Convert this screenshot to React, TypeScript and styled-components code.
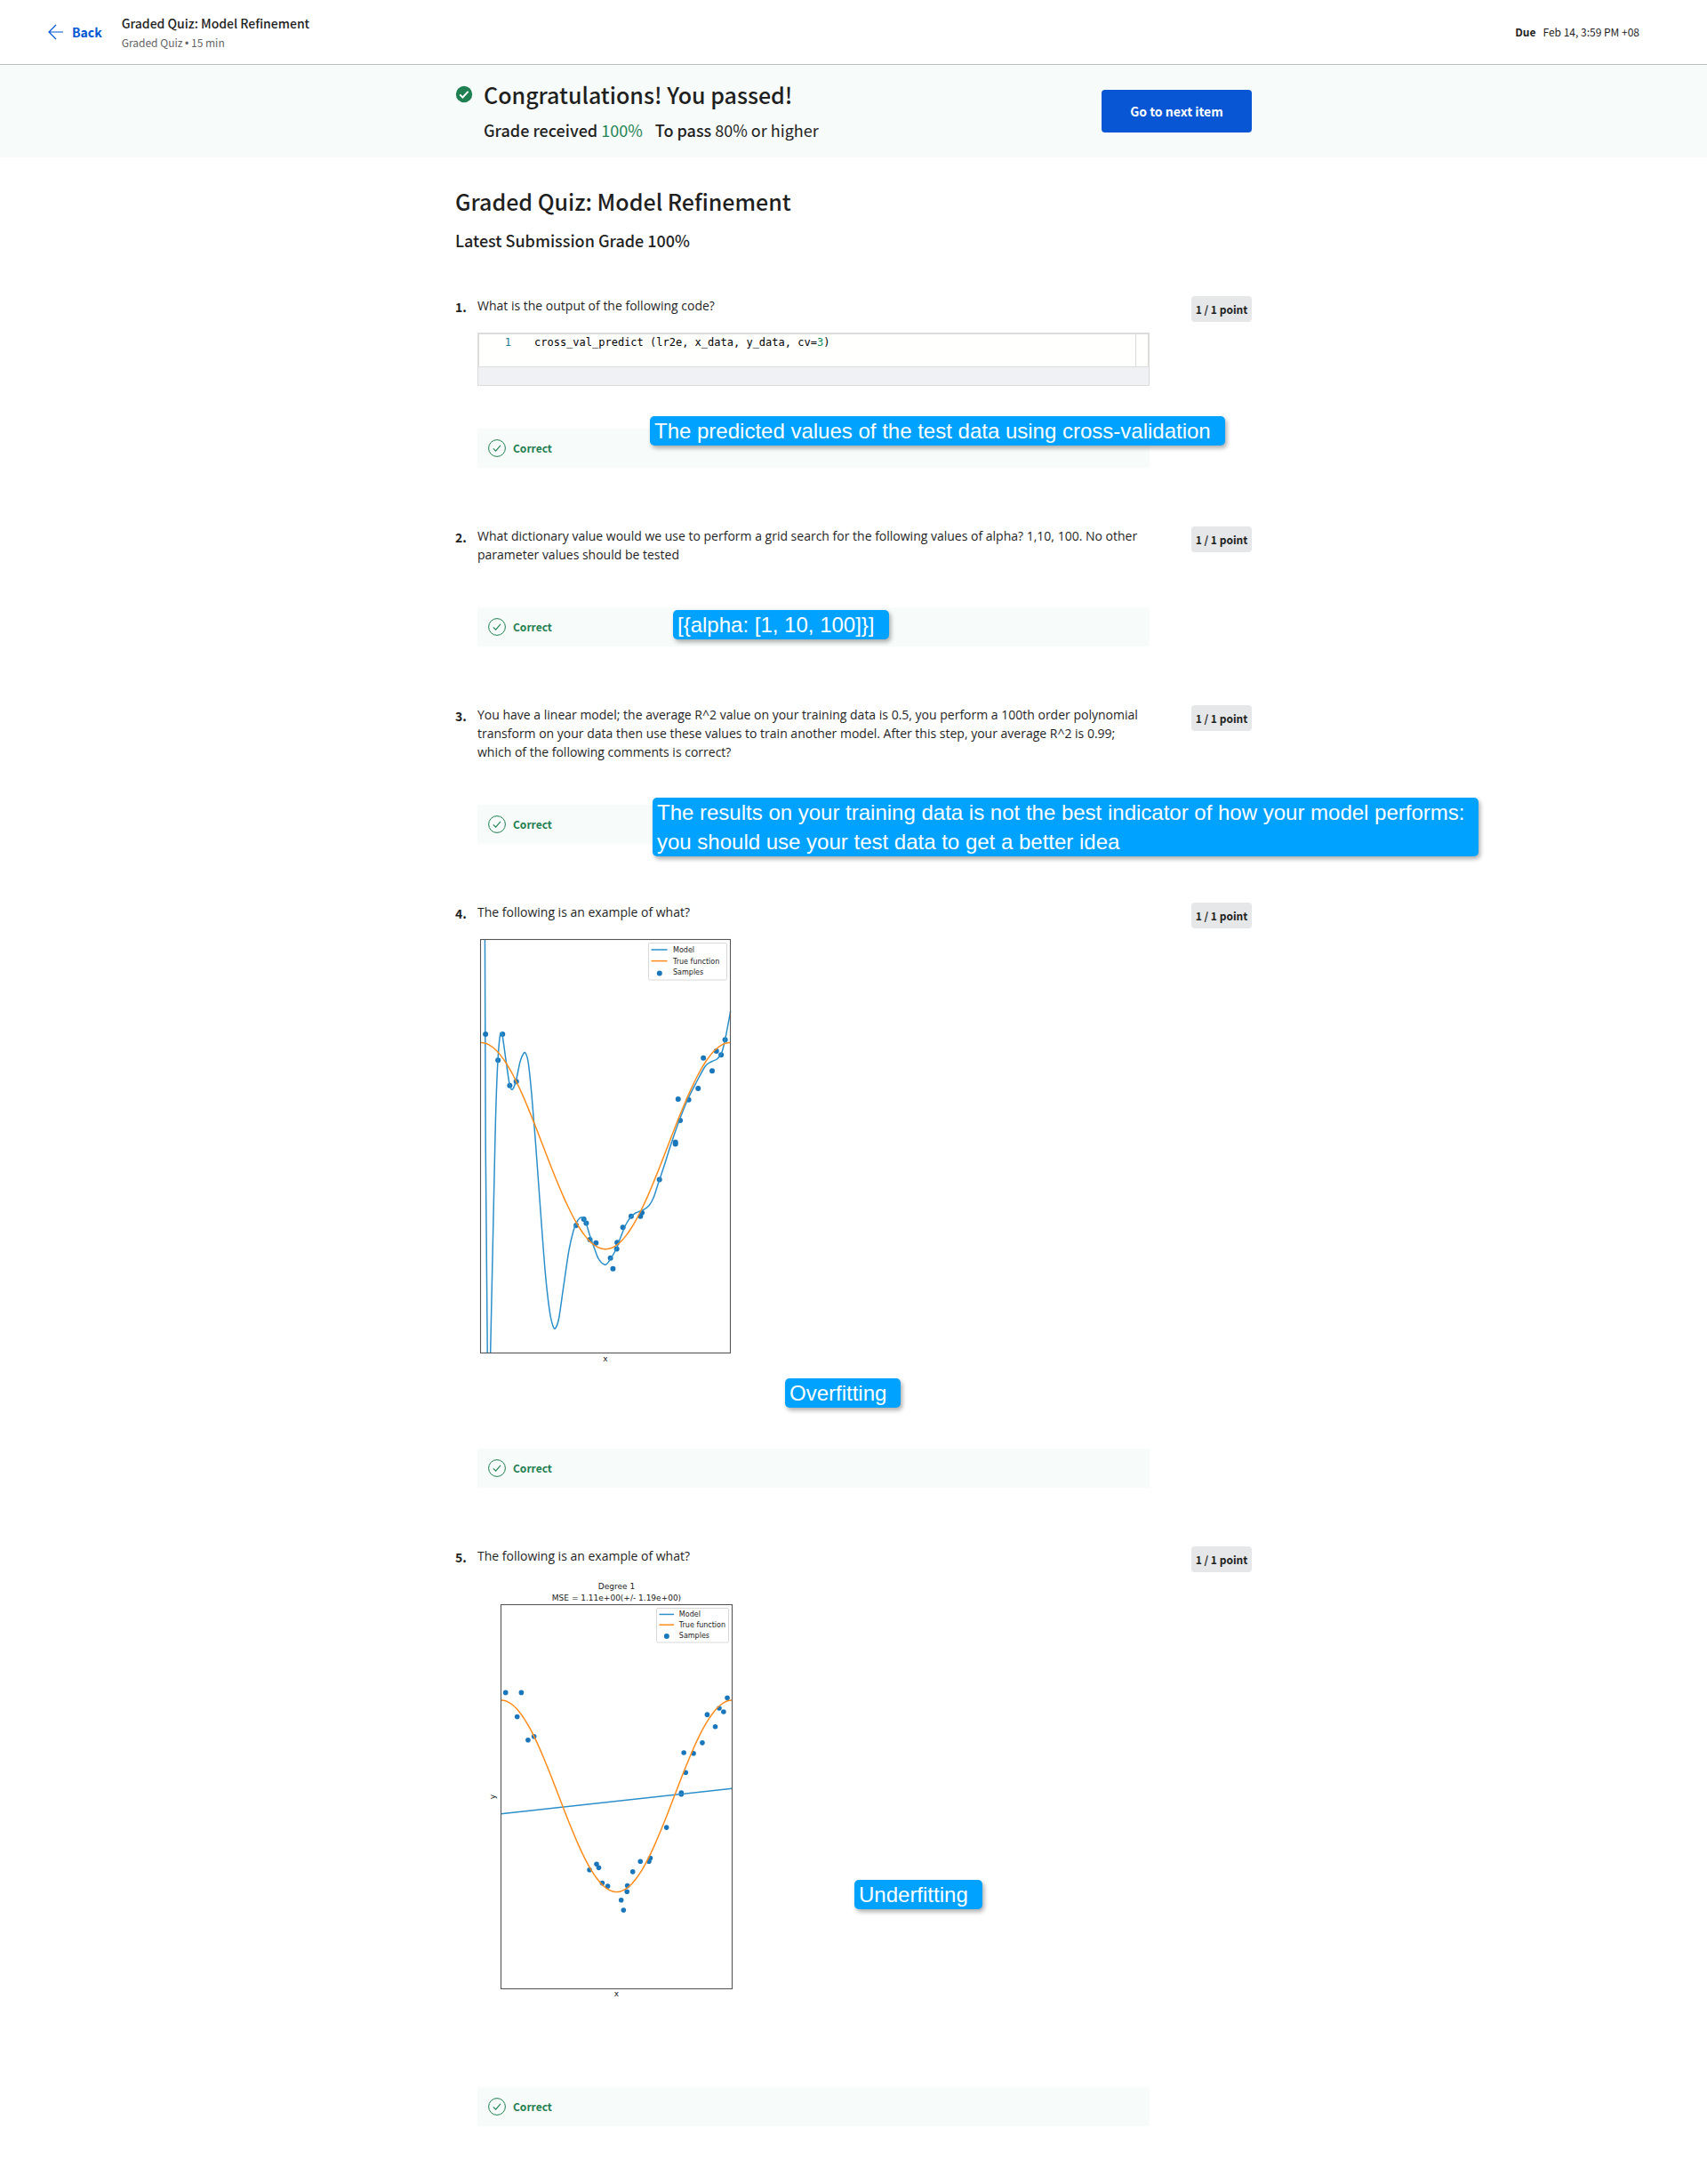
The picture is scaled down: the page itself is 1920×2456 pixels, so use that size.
import React from "react";
import styled, { createGlobalStyle } from "styled-components";

const DISPLAY = `"Source Sans Pro", "Noto Sans CJK SC", "Noto Sans", sans-serif`;
const BODY = `"Open Sans", "Noto Sans", sans-serif`;

const GlobalStyle = createGlobalStyle`
  *, *::before, *::after { box-sizing: border-box; }
  body { margin: 0; background: #fff; color: #1f1f1f; font-family: ${BODY}; }
  h1, h2, p, ol, pre, figure { margin: 0; padding: 0; }
`;

/* ---------- header ---------- */

const Header = styled.header`
  display: flex;
  align-items: center;
  min-height: 73px;
  padding: 0 76px 0 53px;
  border-bottom: 1px solid #bdbdbd;
  font-family: ${DISPLAY};
`;

const BackLink = styled.a`
  display: flex;
  align-items: center;
  gap: 8px;
  margin-right: 22px;
  color: #0056d2;
  font-size: 14px;
  font-weight: 700;
  line-height: 24px;
  text-decoration: none;
`;

const HeaderTitles = styled.div`
  flex: 1;
  padding-top: 2px;
`;

const HeaderTitle = styled.p`
  font-size: 14px;
  font-weight: 500;
  line-height: 22px;
`;

const HeaderMeta = styled.p`
  color: #636363;
  font-size: 12px;
  line-height: 22px;
`;

const Bullet = styled.span`
  font-family: "Liberation Sans", Arial, sans-serif;
`;

const Due = styled.p`
  display: flex;
  gap: 8px;
  font-size: 12px;
  line-height: 24px;
`;

/* ---------- result banner ---------- */

const Banner = styled.section`
  background: #f7fbf9;
  font-family: ${DISPLAY};
`;

const BannerInner = styled.div`
  display: flex;
  align-items: center;
  justify-content: space-between;
  max-width: 896px;
  margin: 0 auto;
  padding: 17px 0;
`;

const Result = styled.div`
  display: grid;
  grid-template-columns: 32px auto;
  row-gap: 10px;
  align-items: center;
`;

const Heading = styled.h1`
  font-family: ${DISPLAY};
  font-size: 25px;
  font-weight: 500;
  line-height: 32px;
`;

const GradeLine = styled.p`
  grid-column: 2;
  display: flex;
  gap: 14px;
  font-size: 18px;
  line-height: 28px;
`;

const Strong = styled.strong`
  font-weight: 500;
`;

const Passed = styled.span`
  color: #1f8354;
`;

const NextButton = styled.button`
  min-width: 169px;
  height: 48px;
  padding: 0 32px;
  border: 0;
  border-radius: 4px;
  background: #0856d3;
  color: #fff;
  font-family: ${DISPLAY};
  font-size: 14px;
  font-weight: 700;
  line-height: 24px;
`;

/* ---------- quiz ---------- */

const Main = styled.main`
  max-width: 896px;
  margin: 0 auto;
  padding: 33px 0 64px;
`;

const SubHeading = styled.h2`
  margin-top: 14px;
  font-family: ${DISPLAY};
  font-size: 18px;
  font-weight: 500;
  line-height: 28px;
`;

const QuestionList = styled.ol`
  display: flex;
  flex-direction: column;
  gap: 66px;
  margin-top: 49px;
  list-style: none;
`;

const QuestionItem = styled.li`
  display: grid;
  grid-template-columns: 25px minmax(0, 1fr) 115px;
  align-items: start;
`;

const QuestionNumber = styled.span`
  padding-top: 2px;
  font-family: ${DISPLAY};
  font-size: 14px;
  font-weight: 700;
  line-height: 21px;
`;

const QuestionBody = styled.div`
  position: relative;
`;

const Prompt = styled.p`
  padding-bottom: 1px;
  font-size: 14px;
  line-height: 21px;
`;

const Points = styled.span`
  justify-self: end;
  min-width: 68px;
  padding: 4px 0;
  border-radius: 4px;
  background: #e5e7e8;
  font-family: ${DISPLAY};
  font-size: 12px;
  font-weight: 700;
  line-height: 21px;
  text-align: center;
`;

const CodeBox = styled.figure`
  margin: 19px 0 2px;
  border: 1px solid #dcdcdc;
  background: #f0f1f4;
`;

const CodeArea = styled.div`
  display: grid;
  grid-template-columns: 36px 1fr 14px;
  height: 38px;
  border: 1px solid #dcdcdc;
  background: #fffffe;
`;

const CodeText = styled.pre`
  padding: 0 0 0 26px;
  color: #000;
  font-family: "DejaVu Sans Mono", monospace;
  font-size: 12px;
  line-height: 18px;
`;

const LineNumber = styled(CodeText)`
  padding-left: 0;
  color: #237893;
  text-align: right;
`;

const CodeNumber = styled.span`
  color: #09885a;
`;

const Ruler = styled.span`
  border-left: 1px solid #dcdcdc;
`;

const CodeFooter = styled.div`
  height: 20px;
`;

const Feedback = styled.p`
  display: flex;
  align-items: center;
  gap: 8px;
  height: 44px;
  margin-top: 48px;
  padding: 0 12px;
  background: #f7fbf9;
  color: #1f7f50;
  font-family: ${DISPLAY};
  font-size: 12px;
  font-weight: 700;
  line-height: 20px;
`;

/* Notes are laid over the page wherever the annotator dropped them. */
const Note = styled.aside<{ $left: number; $bottom: number }>`
  position: absolute;
  left: ${(p) => p.$left}px;
  bottom: ${(p) => p.$bottom}px;
  padding: 0 16px 0 5px;
  border-radius: 5px;
  background: #00a2ff;
  box-shadow: 2px 3px 5px rgba(0, 0, 0, 0.32);
  color: #fff;
  font-family: "Liberation Sans", Arial, sans-serif;
  font-size: 24px;
  line-height: 33px;
  white-space: pre;
`;

const ChartSvg = styled.svg`
  display: block;
  margin-top: 9px;
  font-family: "DejaVu Sans", sans-serif;
`;

/* ---------- icons ---------- */

const ArrowIcon = () => (
  <svg width="20" height="20" viewBox="0 0 20 20" fill="none" stroke="#0056d2" strokeWidth="1.2" aria-hidden="true">
    <path d="M10 2 2 10l8 8M2 10h16" />
  </svg>
);

const PassedIcon = () => (
  <svg width="20" height="20" viewBox="0 0 20 20" aria-hidden="true">
    <circle cx="10" cy="10" r="9.2" fill="#1f7f50" />
    <path d="M5.2 10.4 8.4 13.5 14.6 6.9" fill="none" stroke="#fff" strokeWidth="2" />
  </svg>
);

const CorrectIcon = () => (
  <svg width="20" height="20" viewBox="0 0 20 20" fill="none" stroke="#1f7f50" aria-hidden="true">
    <circle cx="10" cy="10" r="9.4" strokeWidth="1" />
    <path d="M5.8 10.4 8.6 13.1 14 6.8" strokeWidth="1.1" />
  </svg>
);

/* ---------- charts ---------- */

type Point = [number, number];

/* x runs 0..1 over the axes; y is 0 at the crest of the true function and 1 at its trough. */
const SAMPLES: Point[] = [
  [0.02, -0.04], [0.07, 0.086], [0.088, -0.04], [0.117, 0.208], [0.143, 0.189],
  [0.791, 0.274], [0.833, 0.277], [0.871, 0.222], [0.892, 0.075], [0.927, 0.138],
  [0.944, 0.042], [0.963, 0.06], [0.979, -0.013], [0.799, 0.377], [0.78, 0.483],
  [0.78, 0.491], [0.383, 0.885], [0.4135, 0.855], [0.423, 0.874], [0.438, 0.954],
  [0.462, 0.97], [0.52, 1.043], [0.53, 1.095], [0.545, 0.999], [0.547, 0.968],
  [0.57, 0.895], [0.603, 0.841], [0.64, 0.841], [0.646, 0.824], [0.716, 0.664],
];

/* Drawing units, in the same space as the first chart's viewBox. */
const OVERFIT: Point[] = [
  [556.7, 1290], [558, 1240], [560, 1193], [562.3, 1166], [563.8, 1163], [565.2, 1166], [569.3, 1195],
  [573.3, 1221], [576.7, 1226], [580.7, 1215], [585, 1195], [589, 1185.5], [591.5, 1186], [594.3, 1196.7],
  [598, 1231.7], [602.7, 1290], [607.5, 1356], [613.3, 1432], [618.3, 1476], [622.3, 1493],
  [625.2, 1494], [628.7, 1483], [634, 1446.7], [640, 1406.7], [645, 1385], [649.3, 1374.3],
  [654, 1370], [658.3, 1374], [663.3, 1390], [668.3, 1404], [673.3, 1416.7], [680.7, 1423.3],
  [686.7, 1416.7], [693.3, 1405], [698.3, 1391.7], [704, 1378], [710, 1369], [715, 1365],
  [723.3, 1361.7], [730, 1356.7], [735, 1348], [740, 1333], [746.7, 1313], [754, 1290],
  [763.3, 1263], [773.3, 1238], [783.3, 1218], [793.3, 1200], [800, 1195], [806.7, 1191.7],
  [811.7, 1185], [816, 1168], [821.7, 1138],
];

const smooth = (pts: Point[]) =>
  pts.slice(0, -1).reduce((d, p, i) => {
    const before = pts[i - 1] ?? p;
    const next = pts[i + 1];
    const after = pts[i + 2] ?? next;
    const c1 = [p[0] + (next[0] - before[0]) / 6, p[1] + (next[1] - before[1]) / 6];
    const c2 = [next[0] - (after[0] - p[0]) / 6, next[1] - (after[1] - p[1]) / 6];
    return `${d} C${c1.join(" ")} ${c2.join(" ")} ${next.join(" ")}`;
  }, `M${pts[0].join(" ")}`);

type Frame = { x: number; y: number; w: number; h: number; crest: number; trough: number };

const MODEL = "#2b8fca";
const TRUTH = "#ff8c1a";
const DOT = "#1a76ba";

const Plot = ({ frame, model, dot }: { frame: Frame; model: string; dot: number }) => {
  const { x, y, w, h, crest, trough } = frame;
  const place = ([px, py]: Point): Point => [x + px * w, crest + py * (trough - crest)];
  const curve = Array.from({ length: 61 }, (_, i) =>
    place([i / 60, (1 - Math.cos((i / 30) * Math.PI)) / 2]),
  );
  return (
    <>
      {SAMPLES.map((s, i) => {
        const [cx, cy] = place(s);
        return <circle key={i} cx={cx} cy={cy} r={dot} fill={DOT} />;
      })}
      <path d={model} fill="none" stroke={MODEL} strokeWidth="1.5" />
      <path d={smooth(curve)} fill="none" stroke={TRUTH} strokeWidth="1.5" />
      <rect x={x} y={y} width={w} height={h} fill="none" stroke="#555" strokeWidth="1.1" />
    </>
  );
};

const Legend = ({ x, y, w, h, size }: { x: number; y: number; w: number; h: number; size: number }) => {
  const step = h * 0.305;
  const first = y + h * 0.18;
  const textX = x + w * 0.313;
  return (
    <>
      <rect x={x} y={y} width={w} height={h} rx="1.5" fill="#fff" stroke="#d4d4d4" strokeWidth="0.9" />
      <path d={`M${x + 3} ${first}h${w * 0.205}`} stroke={MODEL} strokeWidth="1.5" />
      <path d={`M${x + 3} ${first + step}h${w * 0.205}`} stroke={TRUTH} strokeWidth="1.5" />
      <circle cx={x + w * 0.14} cy={first + step * 2.1} r="3" fill={DOT} />
      {["Model", "True function", "Samples"].map((label, i) => (
        <text key={label} x={textX} y={first + step * i + 3} fontSize={size} fill="#222">
          {label}
        </text>
      ))}
    </>
  );
};

const OverfitChart = () => (
  <ChartSvg width="300" height="535" viewBox="537 1047 300 535" role="img" aria-label="Model that follows every sample">
    <clipPath id="axes">
      <rect x="540.5" y="1057.5" width="281" height="465" />
    </clipPath>
    <g clipPath="url(#axes)">
      <path d="M545.4 1050 546.2 1290 548.3 1530M551.5 1530 556.7 1290" fill="none" stroke={MODEL} strokeWidth="1.5" />
    </g>
    <Plot
      frame={{ x: 540.5, y: 1057.5, w: 281, h: 465, crest: 1173.3, trough: 1405.7 }}
      model={smooth(OVERFIT)}
      dot={3}
    />
    <Legend x={729.5} y={1061.5} w={88} h={41.5} size={8} />
    <text x="681" y="1532" fontSize="9" textAnchor="middle" fill="#222">x</text>
  </ChartSvg>
);

const UnderfitChart = () => (
  <ChartSvg width="300" height="529" viewBox="537 1771 300 529" role="img" aria-label="Straight line model through curved samples">
    <text x="693.5" y="1788" fontSize="9" textAnchor="middle" fill="#222">Degree 1</text>
    <text x="693.5" y="1801" fontSize="9" textAnchor="middle" fill="#222">MSE = 1.11e+00(+/- 1.19e+00)</text>
    <Plot
      frame={{ x: 563.5, y: 1805.5, w: 260, h: 432, crest: 1913, trough: 2128.5 }}
      model="M563.5 2040.7 823.5 2012.3"
      dot={2.8}
    />
    <Legend x={738.5} y={1809.5} w={81} h={38.5} size={8} />
    <text x="693.5" y="2246" fontSize="9" textAnchor="middle" fill="#222">x</text>
    <text transform="translate(557 2021.5) rotate(-90)" fontSize="9" textAnchor="middle" fill="#222">y</text>
  </ChartSvg>
);

/* ---------- questions ---------- */

type Question = {
  prompt: string;
  content?: React.ReactNode;
  note: string;
  left: number;
  bottom: number;
};

const QUESTIONS: Question[] = [
  {
    prompt: "What is the output of the following code?",
    content: (
      <CodeBox>
        <CodeArea>
          <LineNumber>1</LineNumber>
          <CodeText>
            {"cross_val_predict (lr2e, x_data, y_data, cv="}
            <CodeNumber>3</CodeNumber>)
          </CodeText>
          <Ruler />
        </CodeArea>
        <CodeFooter />
      </CodeBox>
    ),
    note: "The predicted values of the test data using cross-validation",
    left: 194,
    bottom: 25,
  },
  {
    prompt:
      "What dictionary value would we use to perform a grid search for the following values of alpha? 1,10, 100. No other parameter values should be tested",
    note: "[{alpha: [1, 10, 100]}]",
    left: 220,
    bottom: 8,
  },
  {
    prompt:
      "You have a linear model; the average R^2 value on your training data is 0.5, you perform a 100th order polynomial transform on your data then use these values to train another model. After this step, your average R^2 is 0.99; which of the following comments is correct?",
    note: "The results on your training data is not the best indicator of how your model performs:\nyou should use your test data to get a better idea",
    left: 197,
    bottom: -14,
  },
  {
    prompt: "The following is an example of what?",
    content: <OverfitChart />,
    note: "Overfitting",
    left: 346,
    bottom: 90,
  },
  {
    prompt: "The following is an example of what?",
    content: <UnderfitChart />,
    note: "Underfitting",
    left: 424,
    bottom: 244,
  },
];

export default function App() {
  return (
    <>
      <GlobalStyle />
      <Header>
        <BackLink href="#">
          <ArrowIcon />
          Back
        </BackLink>
        <HeaderTitles>
          <HeaderTitle>Graded Quiz: Model Refinement</HeaderTitle>
          <HeaderMeta>
            Graded Quiz <Bullet>•</Bullet> 15 min
          </HeaderMeta>
        </HeaderTitles>
        <Due>
          <b>Due</b>
          <span>Feb 14, 3:59 PM +08</span>
        </Due>
      </Header>

      <Banner>
        <BannerInner>
          <Result>
            <PassedIcon />
            <Heading>Congratulations! You passed!</Heading>
            <GradeLine>
              <span>
                <Strong>Grade received</Strong> <Passed>100%</Passed>
              </span>
              <span>
                <Strong>To pass</Strong> 80% or higher
              </span>
            </GradeLine>
          </Result>
          <NextButton type="button">Go to next item</NextButton>
        </BannerInner>
      </Banner>

      <Main>
        <Heading>Graded Quiz: Model Refinement</Heading>
        <SubHeading>Latest Submission Grade 100%</SubHeading>
        <QuestionList>
          {QUESTIONS.map((q, i) => (
            <QuestionItem key={i}>
              <QuestionNumber>{i + 1}.</QuestionNumber>
              <QuestionBody>
                <Prompt>{q.prompt}</Prompt>
                {q.content}
                <Feedback>
                  <CorrectIcon />
                  Correct
                </Feedback>
                <Note $left={q.left} $bottom={q.bottom}>
                  {q.note}
                </Note>
              </QuestionBody>
              <Points>1 / 1 point</Points>
            </QuestionItem>
          ))}
        </QuestionList>
      </Main>
    </>
  );
}
